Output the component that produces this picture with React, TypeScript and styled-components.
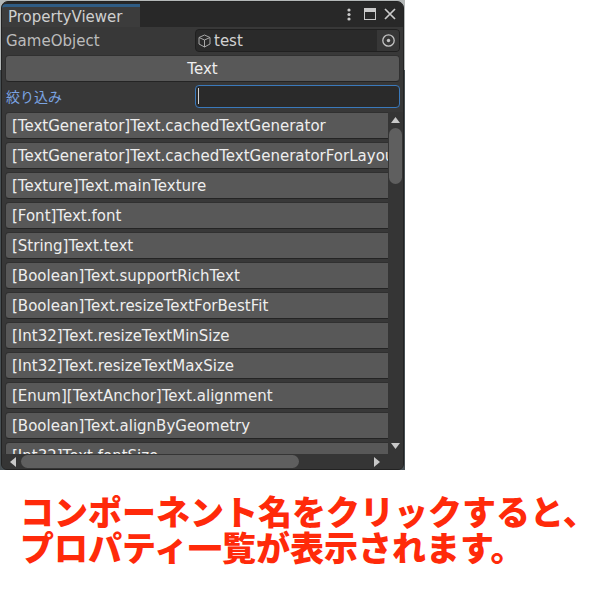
import React, { useState } from "react";
import styled, { createGlobalStyle } from "styled-components";

const GlobalStyle = createGlobalStyle`
  * { box-sizing: border-box; }
  body { margin: 0; background: #fff; }
  button, input { font: inherit; color: inherit; margin: 0; padding: 0; border: 0; }
`;

const Page = styled.main`
  font-family: "DejaVu Sans", "Noto Sans CJK JP", sans-serif;
`;

const Backdrop = styled.div`
  max-width: 405px;
  padding: 1px 1px 0;
  background: linear-gradient(#b4b8b8 0 70px, #485054 70px);
`;

const Window = styled.section`
  display: flex;
  flex-direction: column;
  overflow: hidden;
  border: 1px solid #222;
  border-radius: 7px 7px 6px 6px;
  background: #383838;
  color: #c8c8c8;
  font-size: 15px;
`;

const TitleBar = styled.header`
  display: flex;
  justify-content: space-between;
  height: 25px;
  padding-top: 2px;
  background: #282828;
`;

const Tab = styled.h1`
  margin: 0;
  width: 138px;
  padding-left: 6px;
  border-top: 3px solid #2f5c84;
  border-radius: 4px 0 0 0;
  background: #3c3c3c;
  color: #d0d0d0;
  font-size: 15px;
  font-weight: 400;
  line-height: 20px;
`;

const WindowActions = styled.div`
  display: flex;
  align-items: flex-start;
  padding-right: 4px;
`;

const IconButton = styled.button<{ $width: number }>`
  display: grid;
  place-items: center;
  width: ${(p) => p.$width}px;
  height: 20px;
  background: transparent;
  color: #cacaca;
`;

const Fields = styled.div`
  display: grid;
  grid-template-columns: 190px 1fr;
  row-gap: 3px;
  padding: 2px 3px 0;
  align-items: center;
`;

const Label = styled.label<{ $active?: boolean }>`
  padding-left: 1px;
  font-size: ${(p) => (p.$active ? "14px" : "15px")};
  line-height: 22px;
  color: ${(p) => (p.$active ? "#7ba4e2" : "#bcbcbc")};
`;

const ObjectField = styled.div`
  display: flex;
  align-items: center;
  height: 23px;
  padding-left: 2px;
  overflow: hidden;
  border: 1px solid #202020;
  border-radius: 4px;
  background: #2a2a2a;
`;

const ObjectInput = styled.input`
  flex: 1;
  min-width: 0;
  padding-left: 3px;
  background: transparent;
  color: #d2d2d2;
  outline: none;
`;

const Picker = styled.button`
  display: grid;
  place-items: center;
  width: 22px;
  height: 21px;
  background: #373737;
  color: #c4c4c4;
`;

const ComponentButton = styled.button`
  grid-column: 1 / -1;
  height: 27px;
  border: 1px solid #303030;
  border-bottom-color: #242424;
  border-radius: 4px;
  background: #585858;
  color: #eee;
`;

const FilterInput = styled.input`
  width: 100%;
  min-width: 0;
  height: 23px;
  padding: 0 2px;
  border: 1px solid #3a79bb;
  border-radius: 4px;
  background: #2a2a2a;
  caret-color: #d2d2d2;
  outline: none;

  &:placeholder-shown {
    caret-color: transparent;
    background: linear-gradient(#d2d2d2, #d2d2d2) 2px 2px / 1px 16px no-repeat #2a2a2a;
  }
`;

const ScrollView = styled.div`
  display: grid;
  grid-template-columns: minmax(0, 1fr) 15px;
  margin-top: 4px;
  background: #353535;
`;

const PropertyList = styled.ul`
  display: flex;
  flex-direction: column;
  gap: 3px;
  height: 342px;
  margin: 0;
  padding: 0 0 0 3px;
  overflow: hidden;
  list-style: none;
  background: #383838;
`;

const PropertyButton = styled.button`
  display: block;
  width: 560px;
  height: 27px;
  padding-left: 6px;
  border: 1px solid #303030;
  border-bottom-color: #242424;
  border-radius: 4px;
  background: #585858;
  color: #eee;
  text-align: left;
  white-space: nowrap;
`;

const ScrollBar = styled.div<{ $horizontal?: boolean }>`
  display: flex;
  flex-direction: ${(p) => (p.$horizontal ? "row" : "column")};
  align-items: center;
  padding: ${(p) => (p.$horizontal ? "1px 3px 1px 3px" : "0")};
`;

const ScrollTrack = styled.div<{ $horizontal?: boolean }>`
  flex: 1;
  display: flex;
  flex-direction: ${(p) => (p.$horizontal ? "row" : "column")};
`;

const Thumb = styled.div<{ $horizontal?: boolean }>`
  width: ${(p) => (p.$horizontal ? "80%" : "13px")};
  height: ${(p) => (p.$horizontal ? "13px" : "18%")};
  border-radius: 7px;
  background: #5f5f5f;
`;

const ScrollArrow = styled.button<{ $horizontal?: boolean }>`
  display: grid;
  place-items: center;
  width: ${(p) => (p.$horizontal ? "16px" : "13px")};
  height: ${(p) => (p.$horizontal ? "13px" : "16px")};
  background: transparent;
  color: #c8c8c8;
`;

const Caption = styled.p`
  margin: 23px 0 0;
  padding-left: 20px;
  color: #ff2a0a;
  font-family: "Noto Sans CJK JP", sans-serif;
  font-size: 34px;
  font-weight: 900;
  line-height: 36px;
  white-space: nowrap;
`;

const properties = [
  "[TextGenerator]Text.cachedTextGenerator",
  "[TextGenerator]Text.cachedTextGeneratorForLayout",
  "[Texture]Text.mainTexture",
  "[Font]Text.font",
  "[String]Text.text",
  "[Boolean]Text.supportRichText",
  "[Boolean]Text.resizeTextForBestFit",
  "[Int32]Text.resizeTextMinSize",
  "[Int32]Text.resizeTextMaxSize",
  "[Enum][TextAnchor]Text.alignment",
  "[Boolean]Text.alignByGeometry",
  "[Int32]Text.fontSize",
];

const arrows = {
  up: "0,6 9,6 4.5,0",
  down: "0,0 9,0 4.5,6",
  left: "6,0 6,10 0,5",
  right: "0,0 0,10 6,5",
};

function Arrow({ direction }: { direction: keyof typeof arrows }) {
  const sideways = direction === "left" || direction === "right";
  return (
    <svg width={sideways ? 6 : 9} height={sideways ? 10 : 6} fill="currentColor">
      <polygon points={arrows[direction]} />
    </svg>
  );
}

export default function App() {
  const [objectName, setObjectName] = useState("test");
  const [filter, setFilter] = useState("");
  const shown = properties.filter((p) => p.toLowerCase().includes(filter.toLowerCase()));

  return (
    <Page>
      <GlobalStyle />
      <Backdrop>
        <Window>
          <TitleBar>
            <Tab>PropertyViewer</Tab>
            <WindowActions>
              <IconButton $width={20} aria-label="Menu">
                <svg width="4" height="13" fill="currentColor">
                  <circle cx="2" cy="2" r="1.6" />
                  <circle cx="2" cy="6.5" r="1.6" />
                  <circle cx="2" cy="11" r="1.6" />
                </svg>
              </IconButton>
              <IconButton $width={22} aria-label="Maximize">
                <svg width="12" height="12" fill="none" stroke="currentColor">
                  <rect x="0.5" y="0.5" width="11" height="11" />
                  <path d="M0 2H12" strokeWidth="4" />
                </svg>
              </IconButton>
              <IconButton $width={18} aria-label="Close">
                <svg width="12" height="12" stroke="currentColor" strokeWidth="1.7">
                  <path d="M1 1L11 11M11 1L1 11" />
                </svg>
              </IconButton>
            </WindowActions>
          </TitleBar>

          <Fields>
            <Label htmlFor="object">GameObject</Label>
            <ObjectField>
              <svg width="13" height="14" fill="none" stroke="#a8a8a8" strokeLinejoin="round">
                <path d="M6.5 1L12 3.5V10L6.5 13L1 10V3.5ZM1 3.5L6.5 6L12 3.5M6.5 6V13" />
              </svg>
              <ObjectInput
                id="object"
                value={objectName}
                onChange={(e) => setObjectName(e.target.value)}
              />
              <Picker aria-label="Select object">
                <svg width="13" height="13" fill="none" stroke="currentColor">
                  <circle cx="6.5" cy="6.5" r="5.7" strokeWidth="1.3" />
                  <circle cx="6.5" cy="6.5" r="1.7" fill="currentColor" stroke="none" />
                </svg>
              </Picker>
            </ObjectField>
            <ComponentButton>Text</ComponentButton>
            <Label htmlFor="filter" $active>
              絞り込み
            </Label>
            <FilterInput
              id="filter"
              autoFocus
              placeholder=" "
              value={filter}
              onChange={(e) => setFilter(e.target.value)}
            />
          </Fields>

          <ScrollView>
            <PropertyList>
              {shown.map((property) => (
                <li key={property}>
                  <PropertyButton>{property}</PropertyButton>
                </li>
              ))}
            </PropertyList>
            <ScrollBar>
              <ScrollArrow aria-label="Scroll up">
                <Arrow direction="up" />
              </ScrollArrow>
              <ScrollTrack>
                <Thumb />
              </ScrollTrack>
              <ScrollArrow aria-label="Scroll down">
                <Arrow direction="down" />
              </ScrollArrow>
            </ScrollBar>
            <ScrollBar $horizontal>
              <ScrollArrow $horizontal aria-label="Scroll left">
                <Arrow direction="left" />
              </ScrollArrow>
              <ScrollTrack $horizontal>
                <Thumb $horizontal />
              </ScrollTrack>
              <ScrollArrow $horizontal aria-label="Scroll right">
                <Arrow direction="right" />
              </ScrollArrow>
            </ScrollBar>
          </ScrollView>
        </Window>
      </Backdrop>
      <Caption>
        コンポーネント名をクリックすると、
        <br />
        プロパティ一覧が表示されます。
      </Caption>
    </Page>
  );
}
